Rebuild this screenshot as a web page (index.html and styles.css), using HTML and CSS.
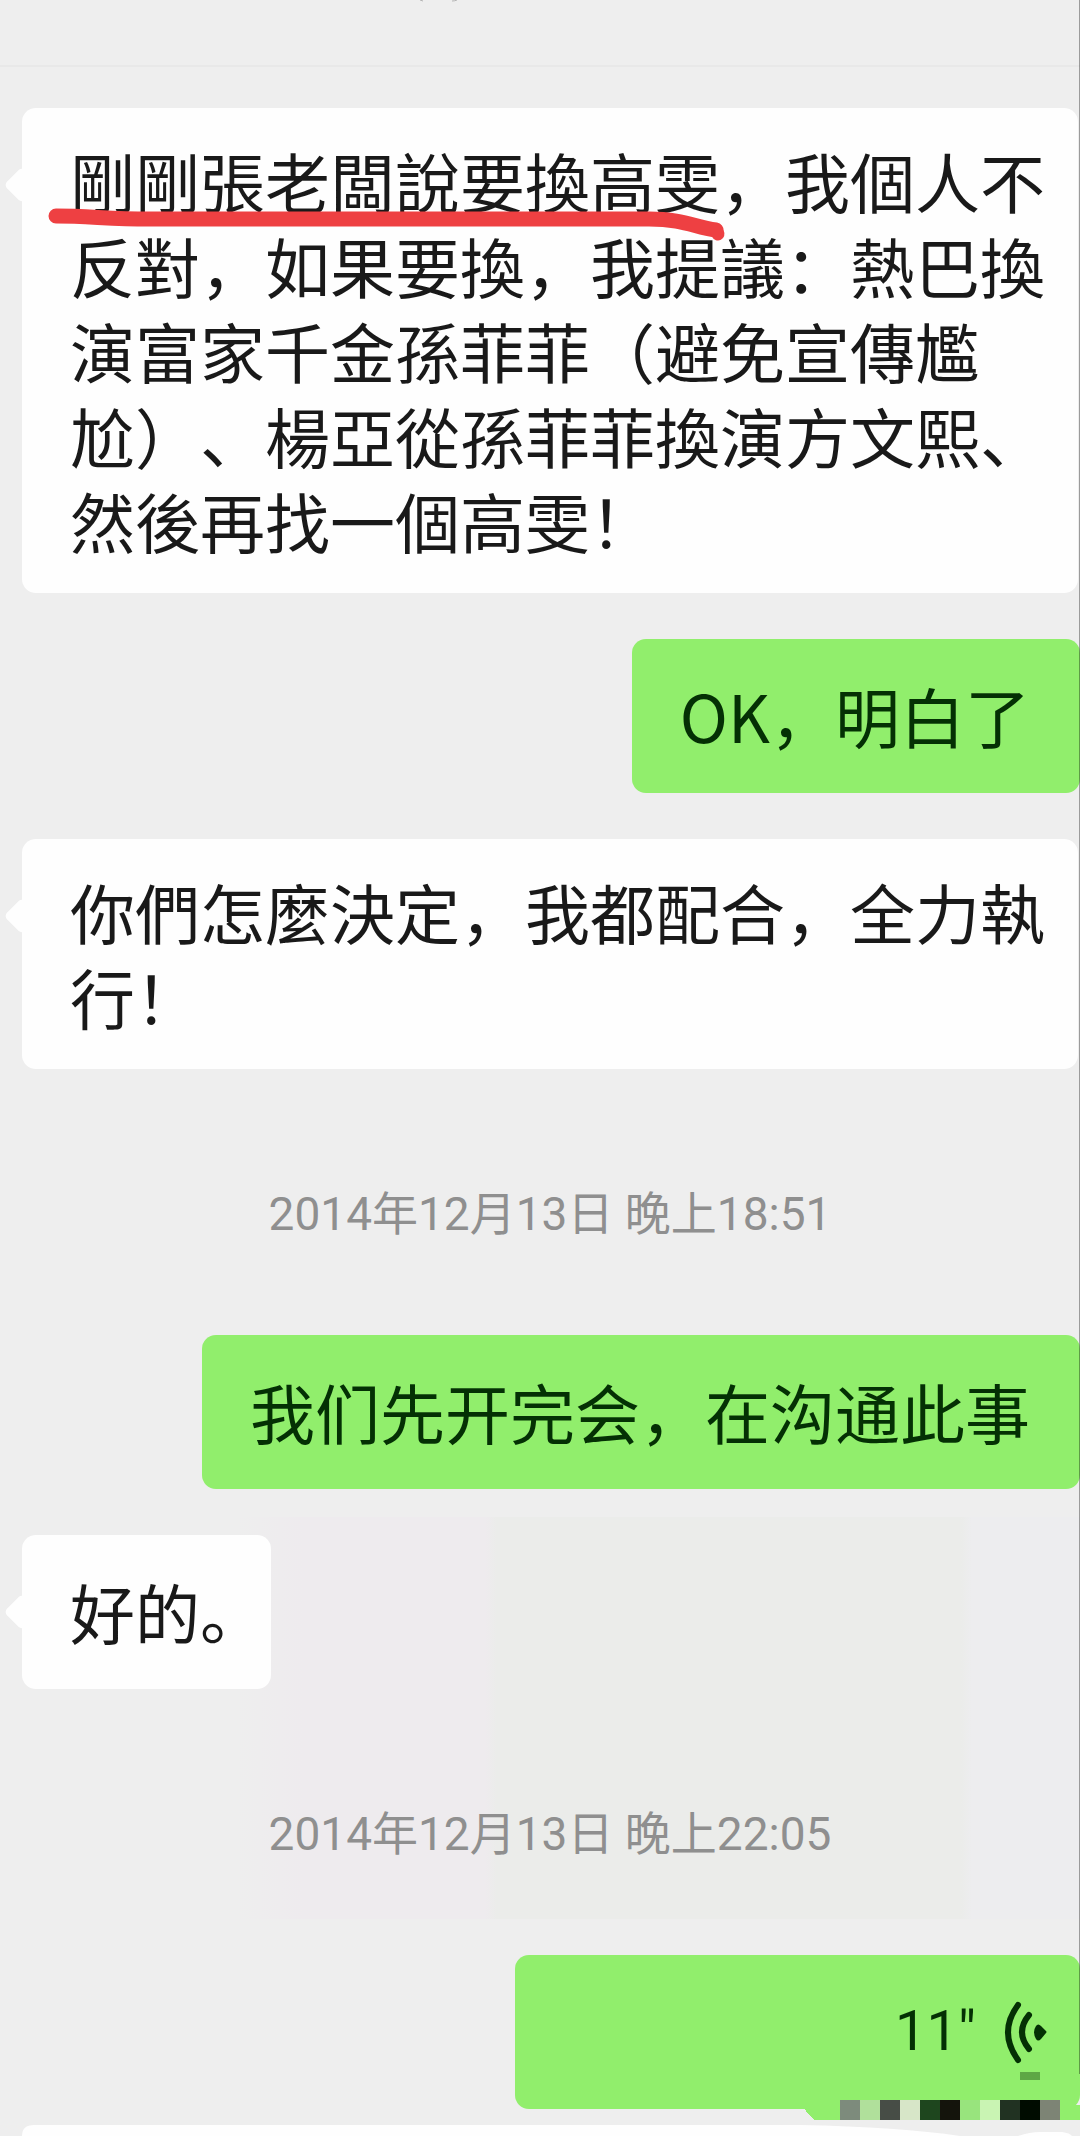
FILE: index.html
```html
<!DOCTYPE html>
<html lang="zh">
<head>
<meta charset="utf-8">
<meta name="viewport" content="width=device-width, initial-scale=1">
<title>聊天</title>
<link rel="stylesheet" href="styles.css">
</head>
<body>
<div class="phone">
  <header class="topbar">
    <svg class="topbar-mark" width="44" height="4" viewBox="0 0 44 4" aria-hidden="true"><path d="M2 0l3 1M34 1q3 0 5-1" fill="none" stroke="#b4b4b4" stroke-width="1"/></svg>
  </header>
  <main class="chat">
    <div class="row">
      <p class="bubble received wide">剛剛張老闆說要換高雯，我個人不<br>反對，如果要換，我提議：熱巴換<br>演富家千金孫菲菲（避免宣傳尷<br>尬）、楊亞從孫菲菲換演方文熙、<br>然後再找一個高雯！
        <svg class="marker" width="700" height="50" viewBox="0 0 700 50" aria-hidden="true"><path d="M17 17C50 17 70 20 110 20L610 20C645 20 655 28 677 31" fill="none" stroke="#ee4042" stroke-width="15" stroke-linecap="round" stroke-linejoin="round"/><path d="M677 31L679 35" stroke="#ee4042" stroke-width="13" stroke-linecap="round"/></svg>
      </p>
    </div>
    <div class="row mine"><p class="bubble sent">OK，明白了</p></div>
    <div class="row"><p class="bubble received wide">你們怎麼決定，我都配合，全力執<br>行！</p></div>
    <time class="stamp" datetime="2014-12-13T18:51">2014年12月13日 晚上18:51</time>
    <div class="row mine"><p class="bubble sent">我们先开完会，在沟通此事</p></div>
    <div class="row"><p class="bubble received short">好的<span class="stop">。</span></p></div>
    <time class="stamp" datetime="2014-12-13T22:05">2014年12月13日 晚上22:05</time>
    <div class="row mine last">
      <button class="bubble sent voice" type="button">
        <span class="seconds">11"</span>
        <svg width="44" height="64" viewBox="0 0 44 64" aria-hidden="true"><g fill="none" stroke="#043004" stroke-width="6" stroke-linecap="round"><path d="M14 5Q-6 32 14 60"/><path d="M25 15Q11 32 25 49"/></g><path d="M32 26Q34 23 37 26L42 31Q43 32 42 33L37 39Q34 42 32 39Q28 32 32 26Z" fill="#043004"/></svg>
      </button>
      <svg class="mosaic" width="276" height="50" viewBox="0 0 276 50" aria-hidden="true" shape-rendering="crispEdges">
        <path d="M0 35H276V50H11Q6 47 0 38Z" fill="#91ee6c"/>
        <path d="M216 2h20v8h-20z" fill="#5ea745"/>
        <path d="M36 30h20v20h-20z" fill="#7d8b7c"/><path d="M56 30h20v20h-20z" fill="#b0e09b"/><path d="M76 30h20v20h-20z" fill="#474d46"/><path d="M96 30h20v20h-20z" fill="#d7e6c8"/><path d="M116 30h20v20h-20z" fill="#1e461e"/><path d="M136 30h20v20h-20z" fill="#14140c"/><path d="M156 30h20v20h-20z" fill="#98e47d"/><path d="M176 30h20v20h-20z" fill="#c9f4b3"/><path d="M196 30h20v20h-20z" fill="#213222"/><path d="M216 30h20v20h-20z" fill="#000c00"/><path d="M236 30h20v20h-20z" fill="#7d8475"/>
      </svg>
    </div>
    <svg class="next" viewBox="0 0 1080 11" preserveAspectRatio="none" aria-hidden="true"><path d="M22 11Q22 0 34 0H800Q900 2 960 11ZM1018 11Q1030 7 1040 7H1062Q1070 8 1072 11Z" fill="#fefefe"/></svg>
  </main>
</div>
</body>
</html>
```
FILE: styles.css
```css
* {
  box-sizing: border-box;
}

body {
  margin: 0;
  background: #eeeeee;
  color: #191919;
  font-family: "Noto Sans CJK SC", "Noto Sans CJK TC", sans-serif;
  text-spacing-trim: space-all;
}

.phone {
  position: relative;
  overflow: hidden;
}

/* thin shade along the right edge of the screen */
.phone::after {
  content: "";
  position: absolute;
  top: 0;
  right: 0;
  bottom: 62px;
  width: 1px;
  background: rgba(0, 0, 0, 0.35);
}

.topbar {
  display: flex;
  justify-content: center;
  padding-right: 200px;
  height: 67px;
  border-bottom: 2px solid #e8e8e8;
}

.chat {
  display: flex;
  flex-direction: column;
  padding-top: 41px;
  background: linear-gradient(90deg, #eeeeee 22%, #eeebee 28%, #eeebee 45%, #ebecea 46%, #ebecea 89%, #ededef 90%) 0 1450px / 100% 402px no-repeat;
}

.row {
  position: relative;
  display: flex;
  margin-bottom: 46px;
}

.mine {
  justify-content: flex-end;
}

.last {
  margin-bottom: 16px;
}

.bubble {
  position: relative;
  min-height: 154px;
  margin: 0;
  border: 0;
  border-radius: 14px;
  font-family: inherit;
  font-size: 65px;
  line-height: 85px;
}

.received {
  margin-left: 22px;
  padding: 30px 30px 30px 48px;
  background: #fefefe;
}

.short {
  padding-top: 34px;
  white-space: nowrap;
}

.wide {
  flex: 1;
  margin-right: 2px;
}

/* speech tail */
.received::before {
  content: "";
  position: absolute;
  top: 64px;
  left: -13px;
  width: 26px;
  height: 26px;
  border-radius: 5px;
  background: #fefefe;
  transform: rotate(45deg);
}

.stop {
  margin-right: -24px;
}

.sent {
  padding: 34px 50px 35px 48px;
  background: #91ee6c;
  color: #043004;
}

.marker {
  position: absolute;
  top: 91px;
  left: 17px;
}

.stamp {
  margin: 69px 0 91px;
  padding-left: 20px;
  color: #8f8f8f;
  font-family: Roboto, "Noto Sans CJK SC", sans-serif;
  font-size: 46px;
  line-height: 60px;
  text-align: center;
}

.voice {
  display: flex;
  align-items: center;
  justify-content: flex-end;
  gap: 28px;
  width: 565px;
  max-width: 100%;
  padding-right: 32px;
}

.seconds {
  font-family: Roboto, "Noto Sans CJK SC", sans-serif;
  font-size: 56px;
}

.mosaic {
  position: absolute;
  right: 0;
  bottom: -11px;
}

.next {
  display: block;
  width: 100%;
  height: 11px;
}
```
